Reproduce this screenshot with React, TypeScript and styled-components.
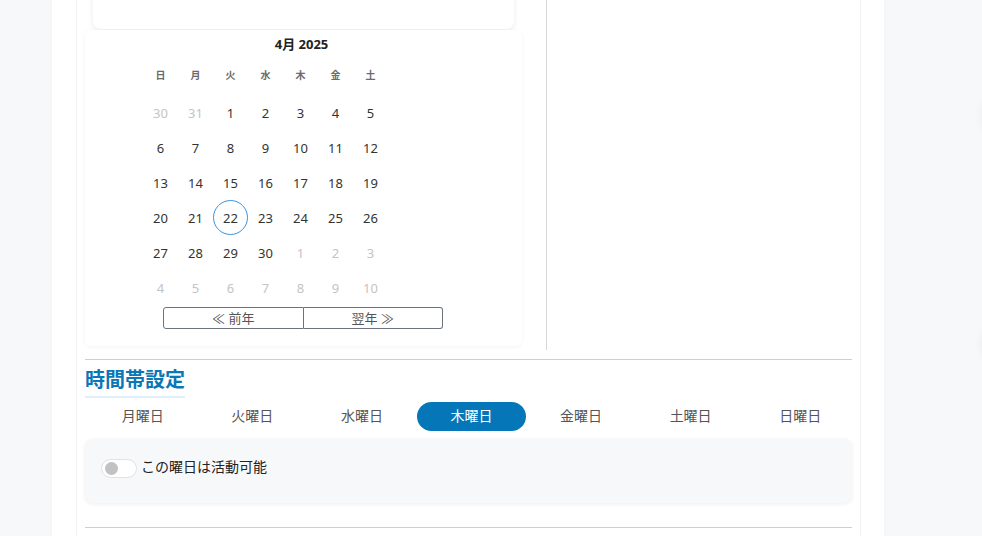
import * as React from "react";
import { FC } from "react";
import styled, { createGlobalStyle } from "styled-components";

const GlobalStyle = createGlobalStyle`
  html, body {
    margin: 0;
    padding: 0;
    background: #f7f8fa;
    font-family: "Noto Sans", "Noto Sans CJK JP", sans-serif;
    overflow: hidden;
  }
`;

const WEEKDAYS = ["日", "月", "火", "水", "木", "金", "土"];
const TABS = ["月曜日", "火曜日", "水曜日", "木曜日", "金曜日", "土曜日", "日曜日"];

type Day = { day: number; muted: boolean };

// 2025年4月 (1日は火曜日)
const buildDays = (): Day[] => {
  const days: Day[] = [{ day: 30, muted: true }, { day: 31, muted: true }];
  for (let d = 1; d <= 30; d++) days.push({ day: d, muted: false });
  let next = 1;
  while (days.length < 42) days.push({ day: next++, muted: true });
  return days;
};

const App: FC = () => {
  const days = buildDays();
  const selected = 22;
  const activeTab = 3;

  return (
    <>
      <GlobalStyle />
      <Page>
        <Panel>
          <Inner>
            <TopRow>
              <CalendarColumn>
                <PrevCard />
                <CalendarCard>
                  <MonthTitle>4月 2025</MonthTitle>
                  <DayGrid>
                    {WEEKDAYS.map((w) => (
                      <WeekdayCell key={w}>{w}</WeekdayCell>
                    ))}
                    {days.map((d, i) => (
                      <DayCell
                        key={i}
                        $muted={d.muted}
                        $selected={!d.muted && d.day === selected}
                      >
                        {d.day}
                      </DayCell>
                    ))}
                  </DayGrid>
                  <YearNav>
                    <YearButton>≪ 前年</YearButton>
                    <YearButton>翌年 ≫</YearButton>
                  </YearNav>
                </CalendarCard>
              </CalendarColumn>
              <SideColumn />
            </TopRow>
            <Rule />
            <SectionTitle>時間帯設定</SectionTitle>
            <Tabs>
              {TABS.map((t, i) => (
                <Tab key={t} $active={i === activeTab}>
                  {t}
                </Tab>
              ))}
            </Tabs>
            <DayCard>
              <ToggleRow>
                <Toggle>
                  <Knob />
                </Toggle>
                <ToggleLabel>この曜日は活動可能</ToggleLabel>
              </ToggleRow>
            </DayCard>
            <Rule $top={24} />
          </Inner>
        </Panel>
      </Page>
      <FloatButton $top={90} />
      <FloatButton $top={318} />
    </>
  );
};

const Page = styled.div`
  padding-left: 52px;
  height: 536px;
`;

const Panel = styled.div`
  width: 785px;
  height: 100%;
  background: #fff;
  padding: 0 23px 0 24px;
  box-shadow: 0 0 3px rgba(0, 0, 0, 0.03);
`;

const Inner = styled.div`
  height: 100%;
  border-left: 1px solid #f2f2f2;
  border-right: 1px solid #f2f2f2;
  padding: 0 8px;
`;

const TopRow = styled.div`
  display: flex;
  height: 350px;
`;

const CalendarColumn = styled.div`
  width: 437px;
  display: flex;
  flex-direction: column;
`;

const PrevCard = styled.div`
  height: 49px;
  margin: -20px 8px 0;
  background: #fff;
  border-radius: 8px;
  box-shadow: 0 2px 6px rgba(0, 0, 0, 0.08);
`;

const CalendarCard = styled.div`
  margin-top: 1px;
  height: 316px;
  background: #fff;
  border-radius: 6px;
  box-shadow: 0 1px 4px rgba(0, 0, 0, 0.05);
  display: flex;
  flex-direction: column;
  align-items: center;
  padding-top: 5px;
  box-sizing: border-box;
`;

const MonthTitle = styled.div`
  font-size: 13px;
  font-weight: 700;
  color: #222;
  line-height: 18px;
  margin-left: -4px;
`;

const DayGrid = styled.div`
  display: grid;
  grid-template-columns: repeat(7, 35px);
  grid-template-rows: 41px;
  grid-auto-rows: 35px;
  align-self: flex-start;
  margin-left: 58px;
  margin-top: 1px;
`;

const WeekdayCell = styled.div`
  display: flex;
  align-items: center;
  justify-content: center;
  font-size: 10px;
  font-weight: 700;
  color: #6b6b6b;
`;

const DayCell = styled.div<{ $muted: boolean; $selected: boolean }>`
  display: flex;
  align-items: center;
  justify-content: center;
  font-size: 13px;
  color: ${(p) => (p.$muted ? "#c4c4c4" : "#333")};
  border-radius: 50%;
  box-sizing: border-box;
  border: 1px solid ${(p) => (p.$selected ? "#3d93dd" : "transparent")};
`;

const YearNav = styled.div`
  display: flex;
  width: 280px;
  margin-top: 2px;
  margin-left: -1px;
`;

const YearButton = styled.button`
  flex: 1;
  height: 22px;
  padding: 0;
  background: #fff;
  border: 1px solid #6b7280;
  font-family: "Noto Sans", "Noto Sans CJK JP", sans-serif;
  font-size: 13px;
  color: #555;
  line-height: 20px;
  &:first-child {
    border-radius: 3px 0 0 3px;
  }
  &:last-child {
    border-left: none;
    border-radius: 0 3px 3px 0;
  }
`;

const SideColumn = styled.div`
  margin-left: 24px;
  border-left: 1px solid #d6d6d6;
  flex: 1;
`;

const Rule = styled.hr<{ $top?: number }>`
  margin: ${(p) => p.$top ?? 9}px 0 0;
  border: none;
  border-top: 1px solid #cfcfcf;
`;

const SectionTitle = styled.h2`
  display: inline-block;
  margin: 8px 0 0;
  padding-bottom: 4px;
  font-size: 20px;
  line-height: 24px;
  font-weight: 700;
  color: #0a77b6;
  border-bottom: 2px solid #e1f1fb;
`;

const Tabs = styled.div`
  display: grid;
  grid-template-columns: repeat(7, 1fr);
  margin: 4px -3px 0 3px;
`;

const Tab = styled.div<{ $active: boolean }>`
  height: 29px;
  box-sizing: border-box;
  padding-bottom: 3px;
  display: flex;
  align-items: center;
  justify-content: center;
  border-radius: 15px;
  font-size: 14px;
  color: ${(p) => (p.$active ? "#fff" : "#555")};
  background: ${(p) => (p.$active ? "#0577b8" : "transparent")};
`;

const DayCard = styled.div`
  margin-top: 8px;
  height: 64px;
  background: #f7f8fa;
  border-radius: 8px;
  box-shadow: 0 1px 4px rgba(0, 0, 0, 0.07);
  padding: 19px 16px 0;
  box-sizing: border-box;
`;

const ToggleRow = styled.label`
  display: flex;
  align-items: center;
  gap: 4px;
`;

const Toggle = styled.span`
  width: 36px;
  height: 19px;
  box-sizing: border-box;
  border: 1px solid #e2e2e2;
  border-radius: 10px;
  background: #fff;
  display: flex;
  align-items: center;
  padding-left: 3px;
`;

const Knob = styled.span`
  width: 13px;
  height: 13px;
  border-radius: 50%;
  background: #c2c2c2;
`;

const ToggleLabel = styled.span`
  font-size: 14px;
  line-height: 18px;
  padding-bottom: 3px;
  color: #222;
`;

const FloatButton = styled.div<{ $top: number }>`
  position: fixed;
  right: -56px;
  top: ${(p) => p.$top}px;
  width: 52px;
  height: 52px;
  border-radius: 50%;
  background: #f7f8fa;
  box-shadow: 0 0 12px rgba(0, 0, 0, 0.14);
`;

export default App;
